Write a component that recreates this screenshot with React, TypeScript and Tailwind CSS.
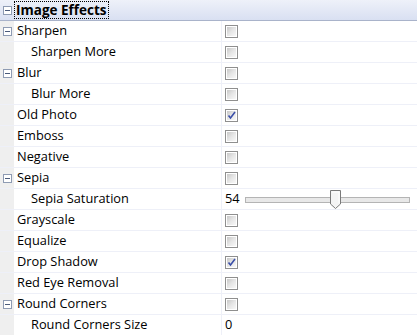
import React from "react";

type Row = {
  label: string;
  level: 0 | 1;
  expander?: boolean;
  kind: "check" | "slider" | "number";
  checked?: boolean;
  value?: number;
};

const rows: Row[] = [
  { label: "Sharpen", level: 0, expander: true, kind: "check" },
  { label: "Sharpen More", level: 1, kind: "check" },
  { label: "Blur", level: 0, expander: true, kind: "check" },
  { label: "Blur More", level: 1, kind: "check" },
  { label: "Old Photo", level: 0, kind: "check", checked: true },
  { label: "Emboss", level: 0, kind: "check" },
  { label: "Negative", level: 0, kind: "check" },
  { label: "Sepia", level: 0, expander: true, kind: "check" },
  { label: "Sepia Saturation", level: 1, kind: "slider", value: 54 },
  { label: "Grayscale", level: 0, kind: "check" },
  { label: "Equalize", level: 0, kind: "check" },
  { label: "Drop Shadow", level: 0, kind: "check", checked: true },
  { label: "Red Eye Removal", level: 0, kind: "check" },
  { label: "Round Corners", level: 0, expander: true, kind: "check" },
  { label: "Round Corners Size", level: 1, kind: "number", value: 0 },
];

function Expander() {
  return (
    <div className="flex h-[9px] w-[9px] items-center justify-center border border-[#8e9bb3] bg-white">
      <div className="h-px w-[5px] bg-[#4a5a7a]" />
    </div>
  );
}

function Check({ checked }: { checked?: boolean }) {
  return (
    <div className="flex h-[13px] w-[13px] items-center justify-center border border-[#8f8f8f] bg-white">
      <div className="relative h-[9px] w-[9px] bg-gradient-to-br from-[#c8c8c8] via-[#e6e6e6] to-[#f8f8f8]">
        {checked && (
          <svg viewBox="0 0 9 9" className="absolute inset-0 h-[9px] w-[9px]">
            <path d="M1.5 4.5 L3.5 7 L8 1" fill="none" stroke="#3a4ea8" strokeWidth="1.6" />
          </svg>
        )}
      </div>
    </div>
  );
}

function Slider({ value }: { value: number }) {
  return (
    <div className="flex items-center">
      <span className="w-[20px]">{value}</span>
      <div className="relative h-[21px] w-[165px]">
        <div className="absolute left-0 right-0 top-[8px] h-[6px] border border-[#b4b4b4] bg-[#e8e8e8]" />
        <svg viewBox="0 0 11 19" className="absolute left-[85px] top-[1px] h-[19px] w-[11px]">
          <path d="M0.5 0.5 H10.5 V14 L5.5 18.5 L0.5 14 Z" fill="#f4f4f4" stroke="#7a7a7a" />
          <path d="M2 2 H9 V13" fill="none" stroke="#ffffff" />
        </svg>
      </div>
    </div>
  );
}

export default function App() {
  return (
    <div
      className="w-[417px] h-[335px] overflow-hidden bg-white text-[12.8px] text-black"
      style={{ fontFamily: '"Open Sans", "Noto Sans", sans-serif' }}
    >
      <div className="flex h-[21px] border-b border-[#a9b3ca] bg-gradient-to-b from-[#eef1f9] to-[#d9e0f2]">
        <div className="flex w-[14px] items-center justify-center">
          <Expander />
        </div>
        <div className="flex items-center">
          <span className="border border-dotted border-black px-[1px] text-[13.5px] font-bold leading-[16px]">
            Image Effects
          </span>
        </div>
      </div>
      {rows.map((r) => (
        <div key={r.label} className="flex h-[21px] border-b border-[#eef0f8]">
          <div className="flex w-[14px] items-center justify-center bg-[#efefef]">
            {r.expander && <Expander />}
          </div>
          <div
            className={`flex w-[208px] items-center whitespace-nowrap overflow-hidden border-r border-[#eef0f8] ${
              r.level === 1 ? "pl-[17px]" : "pl-[3px]"
            }`}
          >
            {r.label}
          </div>
          <div className="flex flex-1 items-center pl-[3px]">
            {r.kind === "check" && <Check checked={r.checked} />}
            {r.kind === "slider" && <Slider value={r.value ?? 0} />}
            {r.kind === "number" && <span>{r.value}</span>}
          </div>
        </div>
      ))}
    </div>
  );
}
